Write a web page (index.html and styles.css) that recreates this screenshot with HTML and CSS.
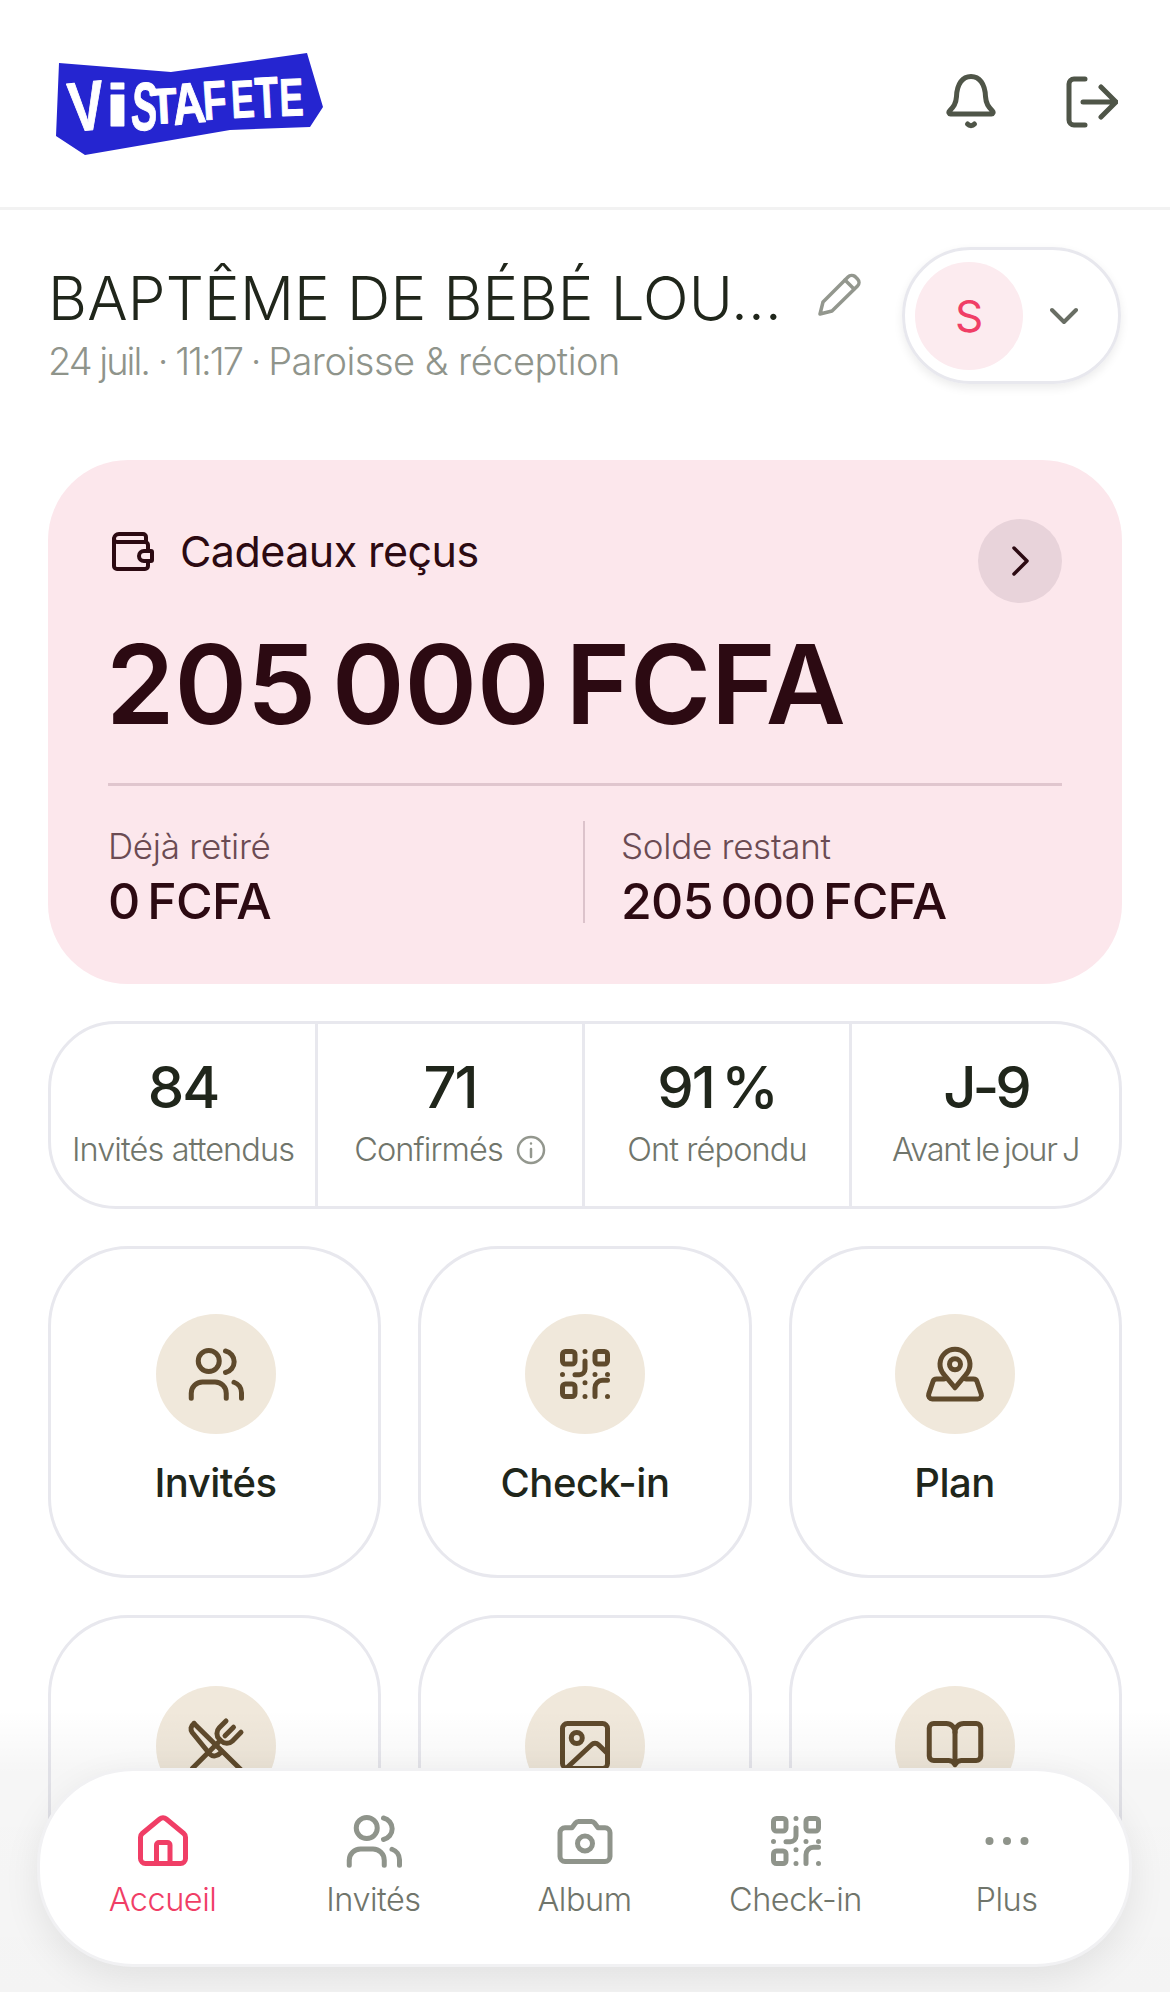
FILE: index.html
```html
<!DOCTYPE html>
<html lang="fr">
<head>
    <meta charset="UTF-8">
    <meta name="viewport" content="width=device-width, initial-scale=1.0">
    <title>VistaFete - Accueil</title>
    <link rel="stylesheet" href="styles.css">
</head>
<body>
    <svg width="0" height="0" class="defs">
        <symbol id="i-users" viewBox="0 0 24 24"><circle cx="9.1" cy="6.8" r="4.2"/><path d="M2.1 21.700v-2a4.500 4.500 0 0 1 4.500-4.500h5a4.500 4.500 0 0 1 4.500 4.500v2"/><path d="M15.800 2.800a4.400 4.400 0 0 1 0 8.600"/><path d="M19.200 15.300a4.500 4.500 0 0 1 3 4.200v2.200"/></symbol>
        <symbol id="i-qr" viewBox="0 0 24 24"><rect x="3" y="3" width="5" height="5" rx="1.2"/><rect x="16" y="3" width="5" height="5" rx="1.2"/><rect x="3" y="16" width="5" height="5" rx="1.2"/><path d="M12 3v.01M12 6.800V10a2.300 2.300 0 0 1-2.300 2.300H8"/><path d="M3 12.200v.01M16 12.200v.01M21 12.200v.01M12 15.500v.01M12 21v.01M21 21v.01"/><path d="M16 21v-3.500a3 3 0 0 1 3-3h2"/></symbol>
    </svg>

    <header class="topbar">
        <svg class="logo" viewBox="0 0 280 110" width="280" height="110">
            <polygon points="9,10 121,19 257,0 273,54 260,74 180,77 35,102 6,83"/>
            <g transform="translate(2 0)">
                <text font-size="70" transform="translate(19 79) rotate(-6) scale(.77 1)">V</text>
                <text font-size="60" transform="translate(53 73) scale(1.5 1)">i</text>
                <text font-size="68" transform="translate(78 76) rotate(4) scale(.58 1)">S</text>
                <text font-size="50" transform="translate(99 71) rotate(-3) scale(.88 1)">T</text>
                <text font-size="58" transform="translate(122 72) rotate(-6) scale(.79 1)">A</text>
                <text font-size="55" transform="translate(152 67) rotate(-4) scale(.71 1)">F</text>
                <text font-size="53" transform="translate(180 65) rotate(-3) scale(.66 1)">E</text>
                <text font-size="58" transform="translate(204 65) rotate(-3) scale(.66 1)">T</text>
                <text font-size="53" transform="translate(228 63) rotate(-2) scale(.68 1)">E</text>
            </g>
        </svg>
        <div class="topbar-actions">
            <svg class="top-icon" viewBox="0 0 50 56"><path d="M3.500 37c4-4 6.500-7 7-14.500C11 10 16.500 2.500 25 2.500S39 10 39.500 22.500c.5 7.500 3 10.500 7 14.500 1.200 1.200.5 3-1 3H4.500c-1.500 0-2.200-1.800-1-3z"/><path d="M21.500 50c2 2.200 5 2.200 7 0"/></svg>
            <svg class="top-icon logout" viewBox="0 0 52 52"><path d="M19 3H8a5 5 0 0 0-5 5v36a5 5 0 0 0 5 5h11"/><path d="M17 26h33M35 11l15 15-15 15"/></svg>
        </div>
    </header>

    <main class="content">
        <section class="event-head">
            <div class="event-info">
                <div class="event-title-row">
                    <h1 class="event-title">BAPTÊME DE BÉBÉ LOU…</h1>
                    <svg class="pencil" viewBox="0 0 44 44"><path d="M2 42l3-12L30 5c2-2 5-2 7-.5l2.500 2.500c2 2 2 5 0 7L14 39z"/><path d="M27 8l9 9"/></svg>
                </div>
                <p class="event-sub"><span class="event-date">24 juil. · 11:17 · </span>Paroisse &amp; réception</p>
            </div>
            <div class="account-pill">
                <span class="avatar">S</span>
                <svg class="pill-chevron" viewBox="0 0 28 18"><path d="M2 3l12 12L26 3"/></svg>
            </div>
        </section>

        <section class="gift-card">
            <div class="gift-top">
                <div class="gift-label">
                    <svg class="wallet" viewBox="0 0 42 39"><path d="M2 7a5 5 0 0 1 5-5h24a3 3 0 0 1 3 3v5"/><path d="M2 7v27a3 3 0 0 0 3 3h28a3 3 0 0 0 3-3v-5"/><path d="M2 7a3 3 0 0 0 3 3h28a3 3 0 0 1 3 3v6"/><path d="M39 19h-7a5 5 0 0 0 0 10h7a1 1 0 0 0 1-1v-8a1 1 0 0 0-1-1z"/></svg>
                    <span>Cadeaux reçus</span>
                </div>
                <span class="gift-arrow"><svg viewBox="0 0 20 32"><path d="M4 3l13 13L4 29"/></svg></span>
            </div>
            <div class="gift-amount">205 000 FCFA</div>
            <div class="gift-split">
                <div class="gift-col">
                    <span class="gift-col-label">Déjà retiré</span>
                    <span class="gift-col-value">0 FCFA</span>
                </div>
                <div class="gift-col gift-col-right">
                    <span class="gift-col-label">Solde restant</span>
                    <span class="gift-col-value">205 000 FCFA</span>
                </div>
            </div>
        </section>

        <section class="stats">
            <div class="stat"><strong>84</strong><span>Invités attendus</span></div>
            <div class="stat"><strong>71</strong><span>Confirmés <svg class="info" viewBox="0 0 30 30"><circle cx="15" cy="15" r="13"/><path d="M15 14v8M15 8.500v.01"/></svg></span></div>
            <div class="stat"><strong>91 %</strong><span>Ont répondu</span></div>
            <div class="stat stat-days"><strong>J-9</strong><span>Avant le jour J</span></div>
        </section>

        <section class="actions">
            <a class="action"><span class="action-icon"><svg><use href="#i-users"/></svg></span><span class="action-name">Invités</span></a>
            <a class="action"><span class="action-icon"><svg><use href="#i-qr"/></svg></span><span class="action-name">Check-in</span></a>
            <a class="action">
                <span class="action-icon"><svg viewBox="0 0 24 24"><path d="M12 17.500l-4.500-5.400a6 6 0 1 1 9 0z"/><circle cx="12" cy="8.100" r="2.200"/><path d="M7.600 14h-3a1.500 1.500 0 0 0-1.400 1L1.500 20a1.500 1.500 0 0 0 1.400 2h18.200a1.500 1.500 0 0 0 1.400-2l-1.700-5a1.500 1.500 0 0 0-1.400-1h-3"/></svg></span>
                <span class="action-name">Plan</span>
            </a>
            <a class="action action-low">
                <span class="action-icon"><svg viewBox="0 0 24 24"><path d="M3.200 3L22 21.500"/><path d="M3.200 3c-1.400 1-1.500 2.500-.7 3.600l7 8.600c1.200 1.200 3 1 4.500-.6"/><path d="M16 2l-2.700 2.700a3.200 3.200 0 0 0 0 4.500l.8.800a3.200 3.200 0 0 0 4.500 0L22 6.500"/><path d="M19 4.500l-3.400 3.400"/><path d="M13 10.500L2.500 21"/></svg></span>
                <span class="action-name">Menu</span>
            </a>
            <a class="action action-low">
                <span class="action-icon"><svg viewBox="0 0 24 24"><rect x="3" y="3" width="18" height="18" rx="2"/><circle cx="8.700" cy="8.800" r="2.200"/><path d="M5 20.500l9.600-9a2 2 0 0 1 2.800 0L21 15"/></svg></span>
                <span class="action-name">Album</span>
            </a>
            <a class="action action-low">
                <span class="action-icon"><svg viewBox="0 0 24 24"><path d="M12 6.500V19"/><path d="M12 6.500A3.500 3.500 0 0 0 8.500 3h-5a1.800 1.800 0 0 0-1.800 1.800V16a1.800 1.800 0 0 0 1.800 1.800h6A3 3 0 0 1 12 19.500a3 3 0 0 1 2.500-1.700h6a1.800 1.800 0 0 0 1.800-1.800V4.800A1.800 1.800 0 0 0 20.500 3h-5A3.500 3.500 0 0 0 12 6.500z"/></svg></span>
                <span class="action-name">Livre d'or</span>
            </a>
        </section>
    </main>

    <div class="nav-fade"></div>
    <nav class="bottom-nav">
        <a class="nav-item active"><svg viewBox="0 0 24 24"><path d="M3 10.500A2 2 0 0 1 3.700 9l7-5.800a2 2 0 0 1 2.600 0l7 5.800a2 2 0 0 1 .7 1.500V19a2 2 0 0 1-2 2H5a2 2 0 0 1-2-2z"/><path d="M9.400 21v-7.400a1 1 0 0 1 1-1h3.400a1 1 0 0 1 1 1V21"/></svg><span>Accueil</span></a>
        <a class="nav-item"><svg><use href="#i-users"/></svg><span>Invités</span></a>
        <a class="nav-item"><svg viewBox="0 0 24 24"><path d="M14.600 4.200H9.400a1.500 1.500 0 0 0-1.200.6L6.800 6.700H4a2 2 0 0 0-2 2v9.500a2 2 0 0 0 2 2h16a2 2 0 0 0 2-2V8.700a2 2 0 0 0-2-2h-2.800l-1.400-1.900a1.500 1.500 0 0 0-1.200-.6z"/><circle cx="12" cy="13" r="3"/></svg><span>Album</span></a>
        <a class="nav-item"><svg><use href="#i-qr"/></svg><span>Check-in</span></a>
        <a class="nav-item"><svg viewBox="0 0 24 24"><circle class="dot" cx="5" cy="12" r="1.600"/><circle class="dot" cx="12" cy="12" r="1.600"/><circle class="dot" cx="19" cy="12" r="1.600"/></svg><span>Plus</span></a>
    </nav>
</body>
</html>
```

FILE: styles.css
```css
* {
    box-sizing: border-box;
}
html, body {
    margin: 0;
    height: 1992px;
    overflow: hidden;
}
body {
    font-family: Inter, 'Noto Sans', sans-serif;
    background: #fff;
    color: #20261b;
    position: relative;
}
.defs {
    position: absolute;
}
svg {
    fill: none;
    stroke: currentColor;
    stroke-linecap: round;
    stroke-linejoin: round;
}

/* top bar */
.topbar {
    height: 210px;
    border-bottom: 3px solid #f2f2f2;
    padding: 53px 52px 0 50px;
    display: flex;
    justify-content: space-between;
    align-items: flex-start;
}
.logo {
    stroke: none;
    display: block;
    fill: #2525d0;
}
.logo text {
    fill: #fff;
    stroke: #fff;
    stroke-width: 1;
    font-family: 'Liberation Sans', sans-serif;
    font-weight: 700;
}
.topbar-actions {
    display: flex;
    gap: 70px;
    padding-top: 21px;
    color: #4f5548;
}
.top-icon {
    width: 50px;
    height: 56px;
    stroke-width: 5;
}
.top-icon.logout {
    width: 52px;
    height: 52px;
    margin-top: 2px;
}

/* event title */
.content {
    padding: 0 48px;
}
.event-head {
    display: flex;
    justify-content: space-between;
    align-items: flex-start;
    padding-top: 37px;
}
.event-info {
    padding-top: 16px;
}
.event-title-row {
    display: flex;
    align-items: flex-start;
    gap: 36px;
}
.event-title {
    margin: 0;
    font-size: 60px;
    line-height: 70px;
    font-weight: 300;
    letter-spacing: 0.2px;
    white-space: nowrap;
}
.pencil {
    width: 44px;
    height: 44px;
    margin-top: 9px;
    color: #93978e;
    stroke-width: 3.5;
}
.event-sub {
    margin: 5px 0 0;
    font-size: 38px;
    line-height: 46px;
    font-weight: 300;
    letter-spacing: -0.5px;
    color: #8f948b;
    white-space: nowrap;
}
.event-date {
    letter-spacing: -2px;
}
.account-pill {
    flex: none;
    width: 219px;
    height: 137px;
    margin-right: 1px;
    border: 3px solid #e8e8ee;
    border-radius: 70px;
    padding: 12px 9px 12px 10px;
    display: flex;
    align-items: center;
    gap: 27px;
    box-shadow: 0 4px 10px rgba(0, 0, 0, 0.08);
}
.avatar {
    width: 108px;
    height: 108px;
    border-radius: 50%;
    background: #fcebef;
    color: #f03e66;
    font-size: 44px;
    display: flex;
    align-items: center;
    justify-content: center;
}
.pill-chevron {
    width: 28px;
    height: 18px;
    color: #696e64;
    stroke-width: 4;
}

/* gifts card */
.gift-card {
    margin-top: 76px;
    height: 524px;
    background: #fce7ec;
    border-radius: 80px;
    padding: 59px 60px 0;
    color: #2c0a12;
}
.gift-top {
    display: flex;
    justify-content: space-between;
    align-items: flex-start;
}
.gift-label {
    display: flex;
    align-items: center;
    gap: 26px;
    font-size: 43px;
    line-height: 56px;
    letter-spacing: -0.55px;
    padding-left: 4px;
    padding-top: 4px;
    font-weight: 400;
}
.wallet {
    width: 42px;
    height: 39px;
    stroke-width: 4;
}
.gift-arrow {
    width: 84px;
    height: 84px;
    border-radius: 50%;
    background: #e8d3da;
    display: flex;
    align-items: center;
    justify-content: center;
}
.gift-arrow svg {
    width: 20px;
    height: 32px;
    stroke-width: 3.5;
}
.gift-amount {
    margin: 16px 0 0 -2px;
    font-size: 110px;
    line-height: 130px;
    font-weight: 600;
    word-spacing: -12px;
    white-space: nowrap;
}
.gift-split {
    margin-top: 34px;
    border-top: 3px solid #e0c6ce;
    padding-top: 35px;
    display: grid;
    grid-template-columns: 475px 1fr;
}
.gift-col {
    height: 102px;
    display: flex;
    flex-direction: column;
}
.gift-col-right {
    border-left: 2px solid #dcc3cb;
    padding-left: 36px;
}
.gift-col-label {
    font-size: 35px;
    line-height: 50px;
    font-weight: 300;
    letter-spacing: -0.3px;
    color: #6b4b53;
}
.gift-col-value {
    margin-top: 1px;
    font-size: 50px;
    line-height: 58px;
    font-weight: 500;
    letter-spacing: -0.7px;
    word-spacing: -5px;
}

/* stat strip */
.stats {
    margin-top: 37px;
    height: 188px;
    border: 3px solid #e8e8ee;
    border-radius: 68px;
    display: grid;
    grid-template-columns: repeat(4, 1fr);
}
.stat {
    display: flex;
    flex-direction: column;
    align-items: center;
    padding-top: 28px;
    border-right: 3px solid #e8e8ee;
}
.stat:last-child {
    border-right: 0;
}
.stat strong {
    font-size: 58px;
    line-height: 70px;
    font-weight: 500;
    letter-spacing: -2px;
    word-spacing: -6px;
}
.stat span {
    margin-top: 6px;
    font-size: 32.5px;
    line-height: 44px;
    font-weight: 300;
    letter-spacing: -0.9px;
    color: #70756b;
    display: flex;
    align-items: center;
    gap: 13px;
    white-space: nowrap;
}
.stat-days strong {
    letter-spacing: -4px;
}
.stat-days span {
    letter-spacing: -1.3px;
    word-spacing: -2.5px;
}
.info {
    width: 30px;
    height: 30px;
    stroke-width: 2.5;
    color: #93978e;
}

/* quick actions */
.actions {
    margin-top: 37px;
    display: grid;
    grid-template-columns: 1fr 334px 1fr;
    gap: 37px;
}
.action {
    height: 332px;
    border: 3px solid #e8e8ee;
    border-radius: 80px;
    padding-top: 65px;
    display: flex;
    flex-direction: column;
    align-items: center;
    gap: 24px;
}
.action:nth-child(3n+1) {
    padding-left: 2px;
}
.action:nth-child(3n) {
    padding-right: 2px;
}
.action-low {
    padding-top: 68px;
}
.action-icon {
    width: 120px;
    height: 120px;
    border-radius: 50%;
    background: #f0e8db;
    color: #5f4a2c;
    display: flex;
    align-items: center;
    justify-content: center;
}
.action-icon svg {
    width: 60px;
    height: 60px;
    stroke-width: 2;
}
.action-name {
    font-size: 40px;
    line-height: 50px;
    font-weight: 500;
    letter-spacing: -0.5px;
}

/* floating bottom navigation */
.nav-fade {
    position: absolute;
    left: 0;
    right: 0;
    bottom: 0;
    height: 282px;
    background: linear-gradient(to bottom, rgba(0, 0, 0, 0) 0%, rgba(0, 0, 0, 0.035) 22%, rgba(0, 0, 0, 0.045) 100%);
}
.bottom-nav {
    position: absolute;
    left: 37px;
    right: 38px;
    top: 1768px;
    height: 199px;
    background: #fff;
    border: 3px solid #f1f1f3;
    border-radius: 96px;
    box-shadow: 0 12px 36px rgba(0, 0, 0, 0.08);
    padding: 0 17px;
    display: grid;
    grid-template-columns: repeat(5, 211px);
}
.nav-item {
    display: flex;
    flex-direction: column;
    align-items: center;
    padding-top: 40px;
    color: #70756b;
}
.nav-item svg {
    width: 60px;
    height: 60px;
    stroke-width: 2;
    color: #8f948b;
}
.nav-item span {
    margin-top: 8px;
    font-size: 32.5px;
    line-height: 42px;
    font-weight: 300;
    letter-spacing: -0.5px;
}
.nav-item.active,
.nav-item.active svg {
    color: #f03e66;
}
.dot {
    fill: currentColor;
    stroke: none;
}
```
